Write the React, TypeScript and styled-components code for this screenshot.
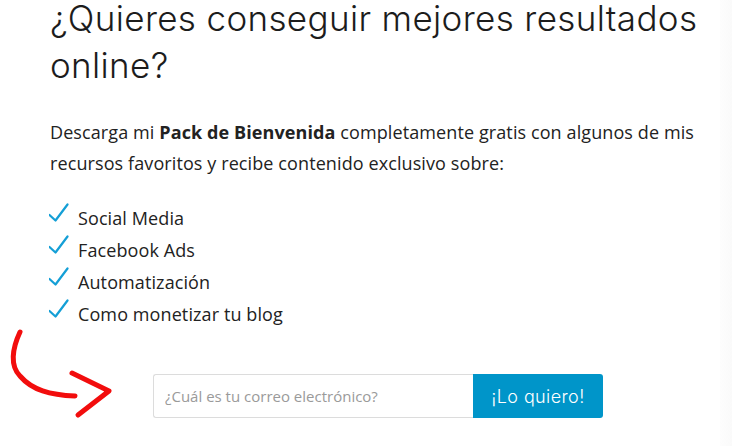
import React from "react";
import styled, { createGlobalStyle } from "styled-components";

const Global = createGlobalStyle`
  html, body { margin: 0; padding: 0; background: #ffffff; }
  body { width: 732px; height: 446px; overflow: hidden; }
`;

const Page = styled.div`
  display: flex;
  width: 732px;
  height: 446px;
`;

const Main = styled.main`
  flex: 1;
  position: relative;
  padding: 0 0 0 50px;
  background: #ffffff;
`;

const SideShade = styled.aside`
  width: 14px;
  background: linear-gradient(90deg, #fdfdfd 0%, #fafafa 100%);
`;

const Heading = styled.h1`
  margin: -5px 0 0;
  font-family: Inter, "Liberation Sans", sans-serif;
  font-weight: 300;
  font-size: 35px;
  line-height: 47px;
  color: #1c1c1c;
  letter-spacing: 0.35px;
  white-space: nowrap;
`;

const Intro = styled.p`
  margin: 28px 0 0;
  font-family: "Open Sans", "Liberation Sans", sans-serif;
  font-size: 18px;
  line-height: 31px;
  color: #222;
  width: 670px;
  letter-spacing: 0.1px;
  strong { font-weight: 700; }
`;

const List = styled.ul`
  list-style: none;
  margin: 23px 0 0;
  padding: 0;
  display: flex;
  flex-direction: column;
`;

const Item = styled.li`
  display: flex;
  align-items: center;
  gap: 9px;
  height: 32px;
  font-family: "Open Sans", "Liberation Sans", sans-serif;
  font-size: 18px;
  letter-spacing: 0.1px;
  color: #222;
`;

const Check = styled.svg`
  width: 20px;
  height: 20px;
  flex: none;
  margin-top: -10px;
  margin-left: -1px;
`;

const Form = styled.form`
  display: flex;
  margin: 44px 0 0 103px;
  height: 44px;
  width: 450px;
`;

const Input = styled.input`
  box-sizing: border-box;
  width: 320px;
  height: 44px;
  border: 1px solid #dcdcdc;
  border-right: none;
  border-radius: 3px 0 0 3px;
  padding: 0 11px;
  font-family: "Open Sans", "Liberation Sans", sans-serif;
  font-size: 15px;
  color: #333;
  outline: none;
  &::placeholder { color: #9a9a9a; }
`;

const Button = styled.button`
  box-sizing: border-box;
  width: 130px;
  height: 44px;
  border: none;
  border-radius: 0 3px 3px 0;
  background: #0095c9;
  color: #ffffff;
  font-family: Inter, "Liberation Sans", sans-serif;
  font-weight: 300;
  font-size: 18px;
  letter-spacing: 0.4px;
  cursor: pointer;
`;

const Arrow = styled.svg`
  position: absolute;
  left: 0;
  top: 320px;
  width: 120px;
  height: 100px;
  overflow: visible;
`;

const items = ["Social Media", "Facebook Ads", "Automatización", "Como monetizar tu blog"];

export default function App() {
  return (
    <Page>
      <Global />
      <Main>
        <Heading>
          ¿Quieres conseguir mejores resultados
          <br />
          online?
        </Heading>
        <Intro>
          Descarga mi <strong>Pack de Bienvenida</strong> completamente gratis con algunos de mis
          recursos favoritos y recibe contenido exclusivo sobre:
        </Intro>
        <List>
          {items.map((t) => (
            <Item key={t}>
              <Check viewBox="0 0 20 20">
                <path d="M0.5 12 L6.5 17.5 L18.5 1.5" fill="none" stroke="#149fd6" strokeWidth="2.2" strokeLinecap="round" strokeLinejoin="round" />
              </Check>
              {t}
            </Item>
          ))}
        </List>
        <Form onSubmit={(e) => e.preventDefault()}>
          <Input type="email" placeholder="¿Cuál es tu correo electrónico?" />
          <Button type="submit">¡Lo quiero!</Button>
        </Form>
        <Arrow viewBox="0 316 120 100">
          <path d="M20 328 C 12 345, 10 362, 20 372 C 32 386, 50 391, 75 392" fill="none" stroke="#f20d0d" strokeWidth="5" strokeLinecap="round" />
          <path d="M72 369 L109 387 L78 411" fill="none" stroke="#f20d0d" strokeWidth="5" strokeLinecap="round" strokeLinejoin="round" />
        </Arrow>
      </Main>
      <SideShade />
    </Page>
  );
}
